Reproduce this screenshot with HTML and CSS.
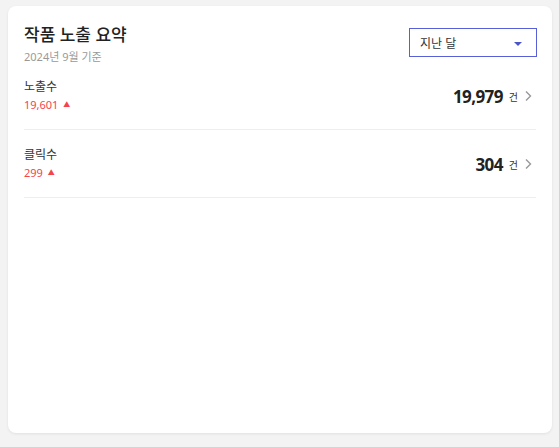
FILE: index.html
```html
<!DOCTYPE html>
<html lang="ko">
<head>
	<meta charset="UTF-8">
	<title>작품 노출 요약</title>
	<link rel="stylesheet" href="styles.css">
</head>
<body>
	<div class="card">
		<div class="head">
			<div>
				<h2 class="title">작품 노출 요약</h2>
				<p class="sub">2024년 9월 기준</p>
			</div>
			<div class="select">
				<span>지난 달</span>
				<i class="caret"></i>
			</div>
		</div>
		<div class="row">
			<div>
				<div class="label">노출수</div>
				<div class="diff">19,601 <span class="up">▲</span></div>
			</div>
			<div class="total">
				<b>19,979</b><span class="unit">건</span>
				<svg width="7" height="12" viewBox="0 0 7 12"><path d="M1 1.5 L5.5 6 L1 10.5" fill="none" stroke="#999" stroke-width="1.4"/></svg>
			</div>
		</div>
		<div class="row">
			<div>
				<div class="label">클릭수</div>
				<div class="diff">299 <span class="up">▲</span></div>
			</div>
			<div class="total">
				<b>304</b><span class="unit">건</span>
				<svg width="7" height="12" viewBox="0 0 7 12"><path d="M1 1.5 L5.5 6 L1 10.5" fill="none" stroke="#999" stroke-width="1.4"/></svg>
			</div>
		</div>
	</div>
</body>
</html>
```

FILE: styles.css
```css
html{background:#f3f3f3;}
body{margin:0;padding:6px 7px 14px 8px;font-family:"Noto Sans","Noto Sans CJK KR",sans-serif;color:#333;}
.card{background:#fff;border-radius:8px;height:427px;padding:0 16px;box-sizing:border-box;box-shadow:0 1px 3px rgba(0,0,0,0.08);}
.head{display:flex;justify-content:space-between;align-items:flex-start;padding-top:18px;height:56px;box-sizing:border-box;}
.title{margin:0;font-size:17px;line-height:22px;font-weight:500;color:#222;}
.sub{margin:4px 0 0;font-size:11px;line-height:14px;color:#999;}
.select{margin:4px -1px 0 0;width:128px;height:29px;box-sizing:border-box;border:1px solid #5760d6;display:flex;align-items:center;justify-content:space-between;padding:0 14px 0 10px;font-size:12px;color:#333;}
.caret{width:0;height:0;border-left:4px solid transparent;border-right:4px solid transparent;border-top:4px solid #4b55c8;margin-top:2px;}
.row{display:flex;justify-content:space-between;align-items:center;padding:16px 0 15px;border-bottom:1px solid #eee;}
.label{font-size:12px;line-height:18px;color:#333;}
.diff{font-size:11px;line-height:18px;color:#f5444c;}
.up{font-size:7px;vertical-align:2px;margin-left:2px;}
.total{display:flex;align-items:center;padding-right:4px;}
.total b{font-size:17px;font-weight:700;color:#222;letter-spacing:-0.6px;}
.unit{font-size:10px;color:#333;margin:0 7px 0 6px;}
.total svg{display:block;}
```
